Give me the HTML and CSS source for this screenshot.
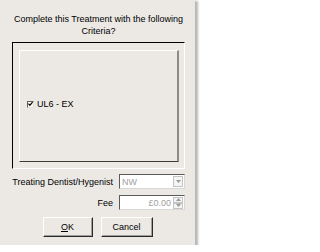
FILE: index.html
```html
<!DOCTYPE html>
<html>
<head>
<meta charset="utf-8">
<link rel="stylesheet" href="styles.css">
</head>
<body>
<div class="dialog">
  <div class="title">Complete this Treatment with the following<br>Criteria?</div>
  <div class="frame">
    <div class="panel">
      <label class="check-row">
        <span class="checkbox">
          <svg width="6" height="6" viewBox="0 0 6 6"><path d="M0.5 2.5 L2.3 4.5 L5.5 0.8" fill="none" stroke="#000" stroke-width="1.4"/></svg>
        </span>
        <span>UL6 - EX</span>
      </label>
    </div>
  </div>
  <div class="fields">
    <span class="label">Treating Dentist/Hygenist</span>
    <div class="combo">
      <span class="value">NW</span>
      <span class="drop"><svg width="5" height="3" viewBox="0 0 5 3"><path d="M0 0 H5 L2.5 3 Z" fill="#9a9a9a"/></svg></span>
    </div>
    <span class="label">Fee</span>
    <div class="spin">
      <span class="value right">£0.00</span>
      <span class="spinner">
        <span class="sbtn"><svg width="5" height="3" viewBox="0 0 5 3"><path d="M0 3 H5 L2.5 0 Z" fill="#9a9a9a"/></svg></span>
        <span class="sbtn"><svg width="5" height="3" viewBox="0 0 5 3"><path d="M0 0 H5 L2.5 3 Z" fill="#9a9a9a"/></svg></span>
      </span>
    </div>
  </div>
  <div class="buttons">
    <button class="btn ok"><u>O</u>K</button>
    <button class="btn cancel">Cancel</button>
  </div>
</div>
</body>
</html>
```

FILE: styles.css
```css
html, body {
  margin: 0;
  padding: 0;
  background: #ffffff;
}
body {
  font-family: "Liberation Sans", Arial, sans-serif;
  font-size: 9px;
  color: #000;
}
.dialog {
  width: 195px;
  height: 245px;
  background: #ece9e5;
  box-sizing: border-box;
  padding-top: 13px;
  box-shadow: 2px 2px 2px 1px rgba(0,0,0,0.28);
}
.title {
  margin: 0 10px 0 12px;
  text-align: center;
  line-height: 12px;
}
.frame {
  margin: 5px 0 0 12px;
  width: 173px;
  height: 127px;
  box-sizing: border-box;
  border-style: solid;
  border-width: 1px;
  border-color: #000 #fff #fff #000;
  padding: 7px 5px 6px 6px;
}
.panel {
  height: 100%;
  box-sizing: border-box;
  border-style: solid;
  border-width: 1px 2px 1px 1px;
  border-color: #fff #8c8c8c #3a3a3a #fff;
  padding: 47px 0 0 7px;
}
.check-row {
  display: flex;
  align-items: center;
  gap: 3px;
  line-height: 12px;
}
.checkbox {
  width: 7px;
  height: 7px;
  box-sizing: border-box;
  background: #fff;
  border-style: solid;
  border-width: 1px;
  border-color: #606060 #e0e0e0 #e0e0e0 #606060;
  display: flex;
  align-items: center;
  justify-content: center;
}
.checkbox svg { display: block; }
.fields {
  margin-top: 5px;
  display: grid;
  grid-template-columns: 101px 66px;
  column-gap: 6px;
  row-gap: 6px;
  margin-left: 12px;
  align-items: center;
}
.label {
  text-align: right;
  line-height: 12px;
  white-space: nowrap;
}
.combo, .spin {
  height: 15px;
  box-sizing: border-box;
  background: #fff;
  border-style: solid;
  border-width: 1px;
  border-color: #5a5a5a #d8d8d8 #d8d8d8 #5a5a5a;
  display: flex;
  align-items: center;
}
.value {
  flex: 1;
  color: #a0a0a0;
  padding-left: 2px;
  line-height: 12px;
}
.value.right {
  text-align: right;
  padding-right: 2px;
}
.drop {
  width: 10px;
  height: 11px;
  margin-right: 1px;
  box-sizing: border-box;
  background: #f4f4f2;
  border: 1px solid #c4c4c4;
  display: flex;
  align-items: center;
  justify-content: center;
}
.drop svg, .sbtn svg { display: block; }
.spinner {
  width: 10px;
  margin-right: 1px;
  display: flex;
  flex-direction: column;
}
.sbtn {
  height: 6px;
  box-sizing: border-box;
  background: #f4f4f2;
  border: 1px solid #c4c4c4;
  display: flex;
  align-items: center;
  justify-content: center;
}
.sbtn + .sbtn { margin-top: 0; }
.buttons {
  margin-top: 7px;
  display: flex;
  justify-content: center;
  gap: 8px;
}
.btn {
  height: 20px;
  box-sizing: border-box;
  background: #ece9e5;
  font-family: "Liberation Sans", Arial, sans-serif;
  font-size: 9px;
  color: #000;
  padding: 0;
  border-style: solid;
  border-width: 1px;
  border-color: #fff #2a2a2a #2a2a2a #fff;
  box-shadow: inset -1px -1px 0 #a0a0a0;
}
.ok { width: 50px; }
.cancel { width: 52px; }
```
